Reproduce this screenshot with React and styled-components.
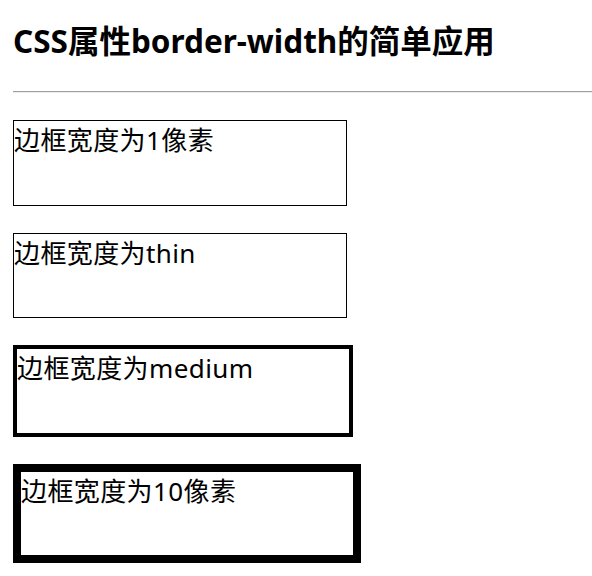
import React from "react";
import styled, { createGlobalStyle } from "styled-components";

const Global = createGlobalStyle`
  html, body { margin: 0; padding: 0; background: #fff; }
  body { font-family: "Noto Sans", "Noto Sans CJK SC", sans-serif; color: #000; }
`;

const Page = styled.div`
  padding: 20px 0 0 13px;
  overflow: hidden;
`;

const Title = styled.h1`
  margin: 0;
  font-family: "Noto Sans", "Noto Sans CJK SC", sans-serif;
  font-size: 31.5px;
  font-weight: 700;
  line-height: 42px;
`;

const Rule = styled.hr`
  margin: 29px 0 27px 0;
  border: 0;
  border-top: 1px solid #a0a0a0;
  border-bottom: 1px solid #ececec;
  height: 0;
`;

const List = styled.div`
  display: flex;
  flex-direction: column;
  align-items: flex-start;
  gap: 27px;
`;

const Box = styled.div`
  box-sizing: content-box;
  width: 332px;
  height: 83.5px;
  border: ${(p) => p.$bw}px solid #000;
  font-size: 26px;
  line-height: 38px;
  letter-spacing: 0.4px;
`;

const items = [
  { bw: 1, text: "边框宽度为1像素" },
  { bw: 1, text: "边框宽度为thin" },
  { bw: 4, text: "边框宽度为medium" },
  { bw: 8, text: "边框宽度为10像素" },
];

export default function App() {
  return (
    <>
      <Global />
      <Page>
        <Title>CSS属性border-width的简单应用</Title>
        <Rule />
        <List>
          {items.map((it) => (
            <Box key={it.text} $bw={it.bw}>
              {it.text}
            </Box>
          ))}
        </List>
      </Page>
    </>
  );
}
